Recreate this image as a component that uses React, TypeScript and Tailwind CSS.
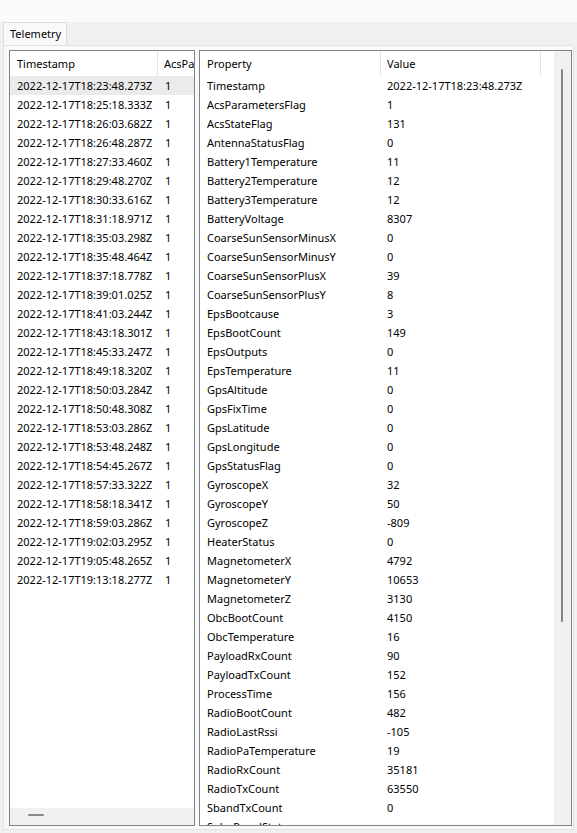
import React from "react";

const times = [
  "2022-12-17T18:23:48.273Z",
  "2022-12-17T18:25:18.333Z",
  "2022-12-17T18:26:03.682Z",
  "2022-12-17T18:26:48.287Z",
  "2022-12-17T18:27:33.460Z",
  "2022-12-17T18:29:48.270Z",
  "2022-12-17T18:30:33.616Z",
  "2022-12-17T18:31:18.971Z",
  "2022-12-17T18:35:03.298Z",
  "2022-12-17T18:35:48.464Z",
  "2022-12-17T18:37:18.778Z",
  "2022-12-17T18:39:01.025Z",
  "2022-12-17T18:41:03.244Z",
  "2022-12-17T18:43:18.301Z",
  "2022-12-17T18:45:33.247Z",
  "2022-12-17T18:49:18.320Z",
  "2022-12-17T18:50:03.284Z",
  "2022-12-17T18:50:48.308Z",
  "2022-12-17T18:53:03.286Z",
  "2022-12-17T18:53:48.248Z",
  "2022-12-17T18:54:45.267Z",
  "2022-12-17T18:57:33.322Z",
  "2022-12-17T18:58:18.341Z",
  "2022-12-17T18:59:03.286Z",
  "2022-12-17T19:02:03.295Z",
  "2022-12-17T19:05:48.265Z",
  "2022-12-17T19:13:18.277Z",
];

const props: [string, string][] = [
  ["Timestamp", "2022-12-17T18:23:48.273Z"],
  ["AcsParametersFlag", "1"],
  ["AcsStateFlag", "131"],
  ["AntennaStatusFlag", "0"],
  ["Battery1Temperature", "11"],
  ["Battery2Temperature", "12"],
  ["Battery3Temperature", "12"],
  ["BatteryVoltage", "8307"],
  ["CoarseSunSensorMinusX", "0"],
  ["CoarseSunSensorMinusY", "0"],
  ["CoarseSunSensorPlusX", "39"],
  ["CoarseSunSensorPlusY", "8"],
  ["EpsBootcause", "3"],
  ["EpsBootCount", "149"],
  ["EpsOutputs", "0"],
  ["EpsTemperature", "11"],
  ["GpsAltitude", "0"],
  ["GpsFixTime", "0"],
  ["GpsLatitude", "0"],
  ["GpsLongitude", "0"],
  ["GpsStatusFlag", "0"],
  ["GyroscopeX", "32"],
  ["GyroscopeY", "50"],
  ["GyroscopeZ", "-809"],
  ["HeaterStatus", "0"],
  ["MagnetometerX", "4792"],
  ["MagnetometerY", "10653"],
  ["MagnetometerZ", "3130"],
  ["ObcBootCount", "4150"],
  ["ObcTemperature", "16"],
  ["PayloadRxCount", "90"],
  ["PayloadTxCount", "152"],
  ["ProcessTime", "156"],
  ["RadioBootCount", "482"],
  ["RadioLastRssi", "-105"],
  ["RadioPaTemperature", "19"],
  ["RadioRxCount", "35181"],
  ["RadioTxCount", "63550"],
  ["SbandTxCount", "0"],
  ["SolarPanelState", ""],
];

export default function App() {
  return (
    <div className="w-[577px] h-[833px] bg-[#f0f0f0] flex flex-col overflow-hidden text-[11px] text-black font-['Noto_Sans',sans-serif]">
      <div className="h-[22px] bg-[#fafafa]" />
      <div className="h-[23px] flex pl-[3px]">
        <div className="w-[64px] h-[23px] bg-[#f9f9f9] border border-b-0 border-[#dcdcdc] pl-[6px] leading-[21px]">
          Telemetry
        </div>
      </div>
      <div className="flex-1 mx-[3px] mb-[3px] bg-[#f9f9f9] border border-[#e3e3e3] pt-[4px] pl-[5px] pr-[1px] pb-[3px] flex gap-[4px] min-h-0">
        {/* Left list */}
        <div className="w-[186px] border border-[#828282] bg-white flex flex-col overflow-hidden">
          <div className="h-[25px] flex shrink-0 whitespace-nowrap overflow-hidden">
            <div className="w-[148px] shrink-0 pl-[7px] border-r border-[#e5e5e5] leading-[25px]">Timestamp</div>
            <div className="flex-1 min-w-0 overflow-hidden pl-[6px] leading-[25px]">AcsPa</div>
          </div>
          <div className="flex-1 overflow-hidden">
            {times.map((t, i) => (
              <div
                key={t}
                className={`h-[19px] flex whitespace-nowrap leading-[19px] ${i === 0 ? "bg-[#ebebeb]" : ""}`}
              >
                <div className="w-[148px] shrink-0 pl-[7px]">{t}</div>
                <div className="pl-[7px]">1</div>
              </div>
            ))}
          </div>
          <div className="h-[17px] shrink-0 bg-[#f0f0f0] relative">
            <div className="absolute left-[18px] top-[6px] w-[16px] h-[2px] rounded-full bg-[#8a8a8a]" />
          </div>
        </div>
        {/* Right property grid */}
        <div className="flex-1 border border-[#828282] bg-white flex overflow-hidden">
          <div className="flex-1 flex flex-col overflow-hidden">
            <div className="h-[25px] flex shrink-0 whitespace-nowrap">
              <div className="w-[181px] shrink-0 pl-[7px] border-r border-[#e5e5e5] leading-[25px]">Property</div>
              <div className="w-[160px] shrink-0 pl-[6px] border-r border-[#e5e5e5] leading-[25px]">Value</div>
            </div>
            <div className="flex-1 overflow-hidden">
              {props.map(([k, v]) => (
                <div key={k} className="h-[19px] flex whitespace-nowrap leading-[19px]">
                  <div className="w-[181px] shrink-0 pl-[7px]">{k}</div>
                  <div className="pl-[6px]">{v}</div>
                </div>
              ))}
            </div>
          </div>
          <div className="w-[17px] shrink-0 bg-[#f0f0f0] relative">
            <div className="absolute left-[7px] top-[18px] w-[2px] h-[553px] rounded-full bg-[#858585]" />
          </div>
        </div>
      </div>
    </div>
  );
}
